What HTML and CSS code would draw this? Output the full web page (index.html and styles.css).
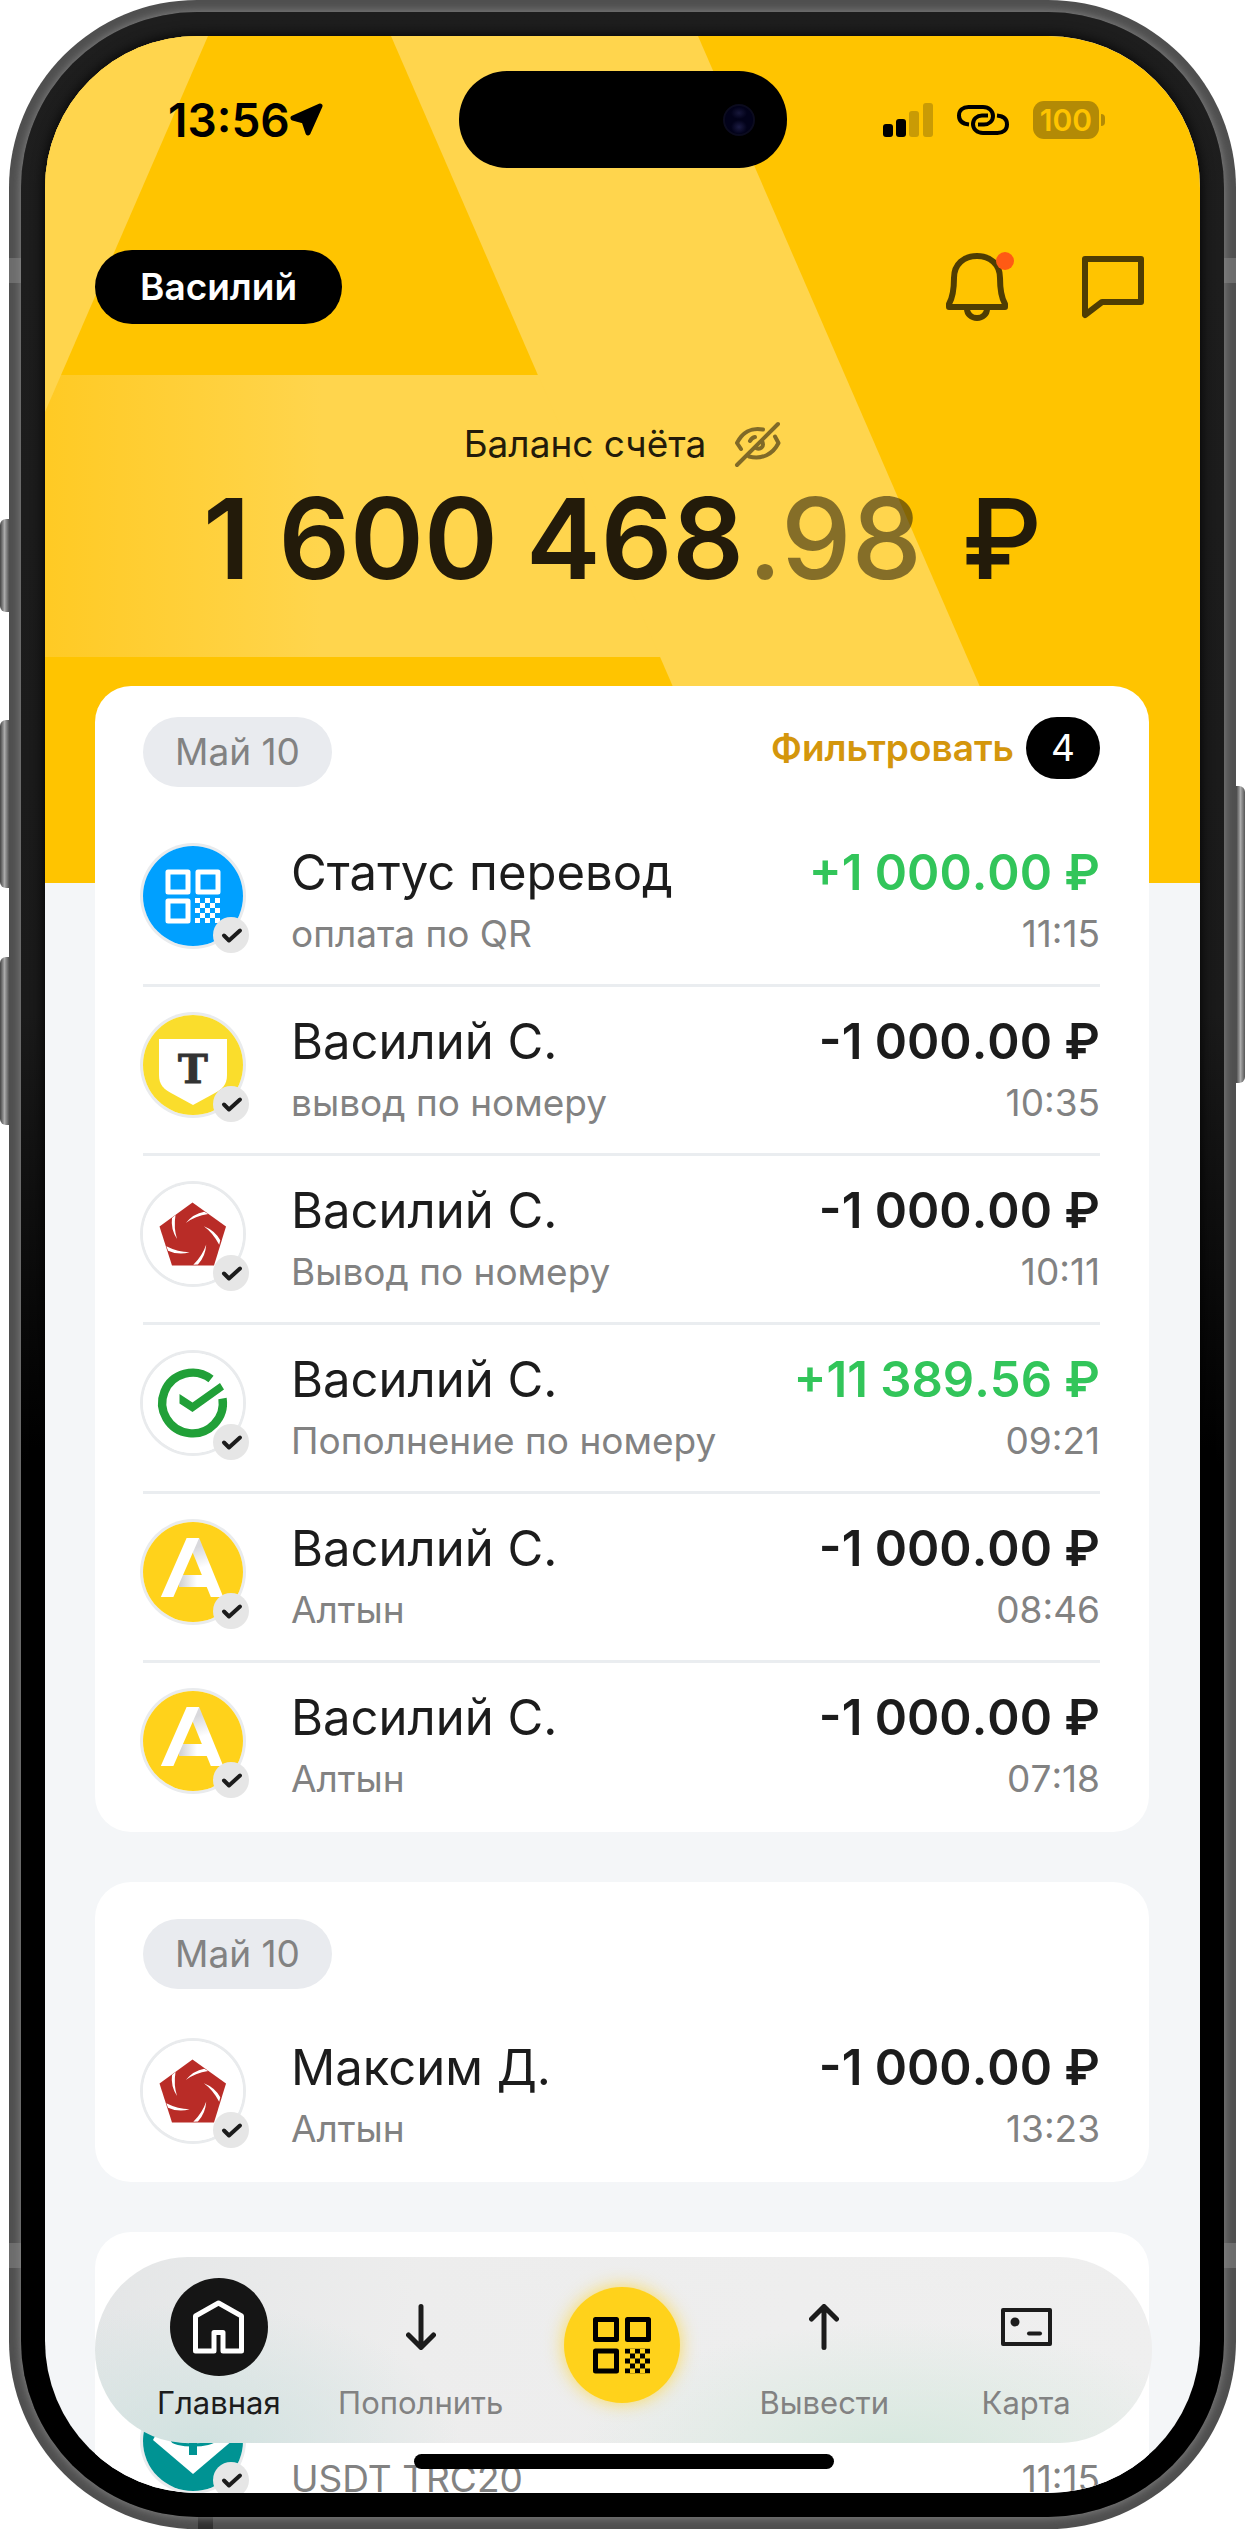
FILE: index.html
```html
<!DOCTYPE html>
<html lang="ru">
<head>
    <meta charset="UTF-8">
    <meta name="viewport" content="width=device-width, initial-scale=1.0">
    <title>Главная</title>
    <link rel="stylesheet" href="styles.css">
</head>
<body>
    <svg class="sprite" aria-hidden="true">
        <defs>
            <pattern id="checker" width="10" height="10" patternUnits="userSpaceOnUse">
                <path d="M0 0h5v5h-5zM5 5h5v5h-5z"/>
            </pattern>
            <pattern id="checker-light" width="10" height="10" patternUnits="userSpaceOnUse">
                <path d="M0 0h5v5h-5zM5 5h5v5h-5z" fill="#fff"/>
            </pattern>
            <linearGradient id="fold-leg" x1="60" y1="26" x2="66" y2="46" gradientUnits="userSpaceOnUse">
                <stop offset="0" stop-color="#d9d9dc"/>
                <stop offset="1" stop-color="#fff"/>
            </linearGradient>
            <linearGradient id="fold-bar" x1="38" y1="0" x2="56" y2="0" gradientUnits="userSpaceOnUse">
                <stop offset="0" stop-color="#cfcfd2"/>
                <stop offset="1" stop-color="#fff"/>
            </linearGradient>
            <clipPath id="altyn-clip"><rect x="10" y="18" width="84" height="59"/></clipPath>
        </defs>
        <symbol id="logo-qr" viewBox="2 2 100 100">
            <rect width="104" height="104" fill="#00a0ff"/>
            <g fill="none" stroke="#fff" stroke-width="5" stroke-linejoin="round">
                <path d="M27 28h20v20h-20zM57 28h20v20h-20zM27 57h20v20h-20z"/>
            </g>
            <g transform="translate(54 54)"><rect width="25" height="25" fill="url(#checker-light)"/></g>
        </symbol>
        <symbol id="logo-t" viewBox="2 2 100 100">
            <rect width="104" height="104" fill="#fadd2c"/>
            <path d="M18 26h68v36c0 10-5 14-12 18l-22 12l-22-12c-7-4-12-8-12-18z" fill="#fff"/>
            <text x="52" y="70" class="logo-letter">Т</text>
        </symbol>
        <symbol id="logo-swirl" viewBox="2 2 100 100">
            <rect width="104" height="104" fill="#fff"/>
            <path d="M51.500 20.500L85 44.500L73 83.500H31L18.500 44.500Z" fill="#b92c27"/>
            <g fill="#fff">
                <path id="blade" d="M31 36Q29.500 47 36 57Q32.500 46 34.500 33Z"/>
                <use href="#blade" transform="rotate(72 51.500 55)"/>
                <use href="#blade" transform="rotate(144 51.500 55)"/>
                <use href="#blade" transform="rotate(216 51.500 55)"/>
                <use href="#blade" transform="rotate(288 51.500 55)"/>
            </g>
        </symbol>
        <symbol id="logo-check" viewBox="2 2 100 100">
            <rect width="104" height="104" fill="#fff"/>
            <path d="M81.500 47.500A30.300 30.300 0 1 1 70 28" fill="none" stroke="#21a038" stroke-width="8.400"/>
            <path d="M38.500 43L51.500 51.500L79 32L83 38.500L51.500 61L38.500 52.500Z" fill="#21a038"/>
        </symbol>
        <symbol id="logo-altyn" viewBox="2 2 100 100">
            <rect width="104" height="104" fill="#ffd21b"/>
            <g clip-path="url(#altyn-clip)" fill="none">
                <path d="M78.500 83L49.500 12" stroke="url(#fold-leg)" stroke-width="11.500"/>
                <path d="M38 61H72" stroke="url(#fold-bar)" stroke-width="12"/>
                <path d="M23.500 83L54.500 12" stroke="#fff" stroke-width="11.500"/>
            </g>
        </symbol>
        <symbol id="logo-usdt" viewBox="2 2 100 100">
            <rect width="104" height="104" fill="#009393"/>
            <path d="M27 22h50l15 29l-40 34l-40-34z" fill="#fff"/>
            <path d="M34 32h36v8h-14v26h-8v-26h-14z" fill="#009393"/>
            <ellipse cx="52" cy="51" rx="21" ry="5" fill="none" stroke="#009393" stroke-width="3"/>
        </symbol>
        <symbol id="tick" viewBox="0 0 36 36">
            <path d="M11 18.500L16 23.500L27 13.500" fill="none" stroke="#1c1c1c" stroke-width="4" stroke-linecap="round" stroke-linejoin="round"/>
        </symbol>
    </svg>

    <div class="phone">
        <span class="side-button mute"></span>
        <span class="side-button volume-up"></span>
        <span class="side-button volume-down"></span>
        <span class="side-button power"></span>
        <span class="antenna top"></span>
        <span class="antenna bottom"></span>
        <span class="antenna-foot"></span>

        <div class="bezel">
            <div class="screen">
                <header class="hero">
                    <svg class="hero-shape" viewBox="0 0 1155 847" preserveAspectRatio="none" aria-hidden="true">
                        <defs>
                            <linearGradient id="bar-fade" x1="0" x2="1" y1="0" y2="0">
                                <stop offset="0" stop-color="#ffca24"/>
                                <stop offset=".45" stop-color="#ffd54d"/>
                            </linearGradient>
                        </defs>
                        <rect y="339" width="616" height="282" fill="url(#bar-fade)"/>
                        <path d="M0 0H163L0 376Z" fill="#ffd54d"/>
                        <path d="M346 0H653L1020 847H713Z" fill="#ffd54d"/>
                    </svg>

                    <div class="status-bar">
                        <div class="clock">
                            <span>13:56</span>
                            <svg width="33" height="34" viewBox="0 0 33 34" aria-hidden="true">
                                <path d="M30 3L3 15L14 18L18 30Z" stroke="#000" stroke-width="5" stroke-linejoin="round"/>
                            </svg>
                        </div>
                        <div class="island"><span class="camera"></span></div>
                        <div class="signals">
                            <svg width="50" height="34" viewBox="0 0 50 34" aria-hidden="true">
                                <rect y="21" width="10" height="13" rx="3"/>
                                <rect x="13" y="16" width="10" height="18" rx="3"/>
                                <rect x="26" y="8" width="10" height="26" rx="3" fill="#c99b05"/>
                                <rect x="40" width="10" height="34" rx="3" fill="#c99b05"/>
                            </svg>
                            <svg width="52" height="30" viewBox="0 0 52 30" fill="none" stroke="#000" stroke-width="4" aria-hidden="true">
                                <path d="M12 19.500C6 19 2 16 2 10.500S6 2 11.500 2H26C32 2 36 6 36 11S32 19.500 27 19.500H21"/>
                                <path d="M40 10.500C46 11 50 14 50 19.500S46 28 40.500 28H26C20 28 16 24 16 19S20 10.500 25 10.500H31"/>
                            </svg>
                            <div class="battery"><span>100</span></div>
                        </div>
                    </div>

                    <div class="top-row">
                        <button class="user" type="button">Василий</button>
                        <div class="actions">
                            <button class="icon-button" type="button" aria-label="Уведомления">
                                <svg width="62" height="68" viewBox="0 0 62 68" fill="none" stroke="#4f3d03" stroke-width="6" stroke-linejoin="round">
                                    <path d="M8 25C8 11 18 3 31 3S54 11 54 25C54 37 55 44 59 51V54H3V51C7 44 8 37 8 25Z"/>
                                    <path d="M21 56A10 9 0 0 0 41 56"/>
                                    <circle cx="59" cy="8" r="9" fill="#ff5a14" stroke="none"/>
                                </svg>
                            </button>
                            <button class="icon-button" type="button" aria-label="Чат">
                                <svg width="62" height="62" viewBox="0 0 62 62" fill="none" stroke="#4f3d03" stroke-width="6" stroke-linejoin="round">
                                    <path d="M3 3H59V46H20L3 59Z"/>
                                </svg>
                            </button>
                        </div>
                    </div>

                    <div class="balance-label">
                        <span>Баланс счёта</span>
                        <button class="icon-button" type="button" aria-label="Скрыть баланс">
                            <svg width="47" height="46" viewBox="0 0 47 46" fill="none" stroke="#806a28" stroke-width="4" stroke-linecap="round" stroke-linejoin="round">
                                <path d="M29 8.500C17 6 8 12 3 22L7 28"/>
                                <path d="M41 15.500L44.500 22C39 33 28 39 15 35.500"/>
                                <path d="M44 3L3 44"/>
                                <path d="M16 20Q18 16.500 21 16M28 20C31 26 26 29 22 27"/>
                            </svg>
                        </button>
                    </div>
                    <p class="balance"><span>1&nbsp;600&nbsp;468</span><span class="cents">.98</span><span class="currency">₽</span></p>
                </header>

                <main class="feed">
                    <section class="card first">
                        <div class="card-head">
                            <span class="date">Май 10</span>
                            <button class="filter" type="button">Фильтровать <span class="count">4</span></button>
                        </div>
                        <ul class="operations">
                            <li class="operation">
                                <div class="avatar"><svg class="logo"><use href="#logo-qr"/></svg><svg class="done"><use href="#tick"/></svg></div>
                                <div class="who"><p class="name">Статус перевод</p><p class="note">оплата по QR</p></div>
                                <div class="sum"><p class="amount income">+1&nbsp;000.00&nbsp;₽</p><p class="note">11:15</p></div>
                            </li>
                            <li class="operation">
                                <div class="avatar"><svg class="logo"><use href="#logo-t"/></svg><svg class="done"><use href="#tick"/></svg></div>
                                <div class="who"><p class="name">Василий С.</p><p class="note">вывод по номеру</p></div>
                                <div class="sum"><p class="amount">-1&nbsp;000.00&nbsp;₽</p><p class="note">10:35</p></div>
                            </li>
                            <li class="operation">
                                <div class="avatar"><svg class="logo"><use href="#logo-swirl"/></svg><svg class="done"><use href="#tick"/></svg></div>
                                <div class="who"><p class="name">Василий С.</p><p class="note">Вывод по номеру</p></div>
                                <div class="sum"><p class="amount">-1&nbsp;000.00&nbsp;₽</p><p class="note">10:11</p></div>
                            </li>
                            <li class="operation">
                                <div class="avatar"><svg class="logo"><use href="#logo-check"/></svg><svg class="done"><use href="#tick"/></svg></div>
                                <div class="who"><p class="name">Василий С.</p><p class="note">Пополнение по номеру</p></div>
                                <div class="sum"><p class="amount income">+11&nbsp;389.56&nbsp;₽</p><p class="note">09:21</p></div>
                            </li>
                            <li class="operation">
                                <div class="avatar"><svg class="logo"><use href="#logo-altyn"/></svg><svg class="done"><use href="#tick"/></svg></div>
                                <div class="who"><p class="name">Василий С.</p><p class="note">Алтын</p></div>
                                <div class="sum"><p class="amount">-1&nbsp;000.00&nbsp;₽</p><p class="note">08:46</p></div>
                            </li>
                            <li class="operation">
                                <div class="avatar"><svg class="logo"><use href="#logo-altyn"/></svg><svg class="done"><use href="#tick"/></svg></div>
                                <div class="who"><p class="name">Василий С.</p><p class="note">Алтын</p></div>
                                <div class="sum"><p class="amount">-1&nbsp;000.00&nbsp;₽</p><p class="note">07:18</p></div>
                            </li>
                        </ul>
                    </section>

                    <section class="card">
                        <div class="card-head">
                            <span class="date">Май 10</span>
                        </div>
                        <ul class="operations">
                            <li class="operation">
                                <div class="avatar"><svg class="logo"><use href="#logo-swirl"/></svg><svg class="done"><use href="#tick"/></svg></div>
                                <div class="who"><p class="name">Максим Д.</p><p class="note">Алтын</p></div>
                                <div class="sum"><p class="amount">-1&nbsp;000.00&nbsp;₽</p><p class="note">13:23</p></div>
                            </li>
                        </ul>
                    </section>

                    <section class="card">
                        <div class="card-head"></div>
                        <ul class="operations">
                            <li class="operation">
                                <div class="avatar"><svg class="logo"><use href="#logo-usdt"/></svg><svg class="done"><use href="#tick"/></svg></div>
                                <div class="who"><p class="name">&nbsp;</p><p class="note">USDT TRC20</p></div>
                                <div class="sum"><p class="amount">&nbsp;</p><p class="note">11:15</p></div>
                            </li>
                        </ul>
                    </section>
                </main>

                <nav class="tab-bar">
                    <a class="tab active" href="#home">
                        <span class="tab-icon">
                            <svg width="51" height="54" viewBox="0 0 51 54" fill="none" stroke="#fff" stroke-width="5" stroke-linejoin="round">
                                <path d="M2.500 16L25.500 3L48.500 16V51H30V32.500H21V51H2.500Z"/>
                            </svg>
                        </span>
                        Главная
                    </a>
                    <a class="tab" href="#deposit">
                        <span class="tab-icon">
                            <svg width="30" height="46" viewBox="0 0 30 46" fill="none" stroke="#1c1c1c" stroke-width="5" stroke-linecap="round" stroke-linejoin="round">
                                <path d="M15 2.500V43M2.500 31L15 43.500L27.500 31"/>
                            </svg>
                        </span>
                        Пополнить
                    </a>
                    <a class="scan" href="#scan" aria-label="Сканировать QR">
                        <svg width="58" height="57" viewBox="0 0 58 57">
                            <path d="M2.500 2.500h21v20h-21zM34.500 2.500h21v20h-21zM2.500 34h21v20h-21z" fill="none" stroke="#000" stroke-width="5" stroke-linejoin="round"/>
                            <g transform="translate(32 31.500)"><rect width="25" height="25" fill="url(#checker)"/></g>
                        </svg>
                    </a>
                    <a class="tab" href="#withdraw">
                        <span class="tab-icon">
                            <svg width="30" height="46" viewBox="0 0 30 46" fill="none" stroke="#1c1c1c" stroke-width="5" stroke-linecap="round" stroke-linejoin="round">
                                <path d="M15 43.500V3M2.500 15L15 2.500L27.500 15"/>
                            </svg>
                        </span>
                        Вывести
                    </a>
                    <a class="tab" href="#card">
                        <span class="tab-icon">
                            <svg width="51" height="38" viewBox="0 0 51 38" fill="none" stroke="#1c1c1c" stroke-width="4" stroke-linecap="round" stroke-linejoin="round">
                                <path d="M2 2H49V36H2Z"/>
                                <path d="M28 25.500H39"/>
                                <circle cx="14" cy="14" r="4.500" fill="#1c1c1c" stroke="none"/>
                            </svg>
                        </span>
                        Карта
                    </a>
                </nav>
                <span class="home-indicator"></span>
            </div>
        </div>
    </div>
</body>
</html>
```
FILE: styles.css
```css
* {
    box-sizing: border-box;
}
body {
    margin: 0;
    background: #fff;
    color: #1c1c1c;
    font-family: Inter, "Noto Sans", sans-serif;
    font-size: 37px;
    line-height: 44px;
}
p, ul {
    margin: 0;
    padding: 0;
}
button {
    font: inherit;
    border: none;
    padding: 0;
    background: none;
    cursor: pointer;
}
a {
    text-decoration: none;
}
svg {
    display: block;
    flex: none;
}
.sprite {
    position: absolute;
    width: 0;
    height: 0;
}

/* device */
.phone {
    position: relative;
    height: 100vh;
    margin: 0 9px;
    padding: 12px;
    background: #4f4f4f;
    border-radius: 188px;
}
.bezel {
    position: relative;
    height: 100%;
    padding: 24px;
    background: linear-gradient(#1e1e1e, #1a1a1a 40%, #000 58%);
    border-radius: 176px;
    box-shadow: 0 0 10px #8a8a8a;
}
.side-button {
    position: absolute;
    width: 9px;
    background: linear-gradient(90deg, #444, #aaa 50%, #555);
}
.mute, .volume-up, .volume-down {
    left: -9px;
    border-radius: 6px 0 0 6px;
}
.mute {
    top: 519px;
    height: 93px;
}
.volume-up {
    top: 720px;
    height: 168px;
}
.volume-down {
    top: 957px;
    height: 168px;
}
.power {
    top: 786px;
    right: -9px;
    height: 297px;
    border-radius: 0 6px 6px 0;
}
.antenna {
    position: absolute;
    left: 0;
    right: 0;
    height: 25px;
    background: #6c6c6c;
}
.antenna.top {
    top: 258px;
}
.antenna.bottom {
    bottom: 261px;
}
.antenna-foot {
    position: absolute;
    left: 189px;
    bottom: 0;
    width: 15px;
    height: 12px;
    background: #303030;
}
.screen {
    position: relative;
    height: 100%;
    overflow: hidden;
    background: #f4f6f8;
    border-radius: 152px;
    box-shadow: 0 0 14px #000;
}

/* header */
.hero {
    position: relative;
    padding-bottom: 277px;
    background: #ffc400;
}
.hero-shape {
    position: absolute;
    inset: 0;
    width: 100%;
    height: 100%;
}
.status-bar {
    position: relative;
    display: grid;
    grid-template-columns: 1fr auto 1fr;
    align-items: center;
    padding: 35px 95px 0 95px;
}
.clock {
    display: flex;
    align-items: center;
    padding-left: 28px;
    color: #000;
    font-size: 46px;
    font-weight: 600;
}
.island {
    display: flex;
    align-items: center;
    justify-content: flex-end;
    width: 328px;
    height: 97px;
    padding: 0 32px;
    background: #000;
    border-radius: 48px;
}
.camera {
    width: 32px;
    height: 32px;
    border-radius: 50%;
    border: 2px solid #0b0b1e;
    background: radial-gradient(ellipse 8px 6px at 50% 25%, #17173a, transparent), radial-gradient(ellipse 8px 7px at 50% 75%, #1c1c44, transparent), #02021a;
}
.signals {
    display: flex;
    align-items: center;
    justify-content: flex-end;
    gap: 24px;
}
.battery {
    position: relative;
    width: 66px;
    height: 38px;
    margin-right: 6px;
    background: #b38a05;
    border-radius: 11px;
    color: #ffc400;
    font-size: 30px;
    font-weight: 600;
    line-height: 38px;
    text-align: center;
}
.battery::after {
    content: "";
    position: absolute;
    top: 13px;
    right: -6px;
    width: 4px;
    height: 12px;
    background: #b38a05;
    border-radius: 0 6px 6px 0;
}
.top-row {
    position: relative;
    display: flex;
    align-items: center;
    justify-content: space-between;
    margin-top: 82px;
    padding: 0 56px 0 50px;
}
.user {
    height: 74px;
    padding: 0 45px;
    background: #000;
    border-radius: 37px;
    color: #fff;
    font-weight: 600;
}
.actions {
    display: flex;
    align-items: center;
    gap: 74px;
}
.icon-button svg {
    overflow: visible;
}
.balance-label {
    position: relative;
    display: flex;
    align-items: center;
    justify-content: center;
    gap: 28px;
    height: 44px;
    margin-top: 98px;
    color: #231b0a;
}
.balance {
    position: relative;
    display: flex;
    justify-content: center;
    margin-top: 4px;
    color: #231b0a;
    font-size: 112px;
    font-weight: 600;
    line-height: 136px;
}
.cents {
    margin-left: 4px;
    font-weight: 500;
    opacity: .55;
}
.currency {
    margin-left: 40px;
    font-weight: 500;
}

/* operations */
.feed {
    position: relative;
    display: grid;
    gap: 50px;
    margin-top: -197px;
    padding: 0 51px 0 50px;
}
.card {
    padding: 37px 49px 0 48px;
    background: #fff;
    border-radius: 36px;
}
.card.first {
    padding-top: 31px;
}
.card-head {
    display: flex;
    align-items: flex-start;
    justify-content: space-between;
    height: 94px;
}
.first .card-head {
    height: 101px;
}
.date {
    padding: 13px 32px;
    background: #e9ebef;
    border-radius: 35px;
    color: #828282;
}
.filter {
    display: flex;
    align-items: center;
    gap: 12px;
    color: #d4960c;
    font-weight: 600;
}
.count {
    width: 74px;
    background: #000;
    border-radius: 31px;
    color: #fff;
    font-weight: 400;
    line-height: 62px;
}
.operations {
    list-style: none;
}
.operation {
    display: flex;
    align-items: flex-start;
    height: 169px;
    padding-top: 26px;
    border-bottom: 3px solid #eaedf0;
}
.operation:last-child {
    border-bottom: none;
}
.avatar {
    position: relative;
    flex: none;
    width: 100px;
    height: 100px;
    margin: 2px 48px 0 0;
    border-radius: 50%;
    box-shadow: 0 0 0 3px #e9ebed;
}
.logo {
    width: 100px;
    height: 100px;
    border-radius: 50%;
}
.logo-letter {
    fill: #333;
    stroke: #333;
    stroke-width: 1px;
    font-family: "DejaVu Serif", serif;
    font-size: 40px;
    font-weight: 700;
    text-anchor: middle;
}
.done {
    position: absolute;
    right: -6px;
    bottom: -7px;
    width: 36px;
    height: 36px;
    background: #e6e6e6;
    border-radius: 50%;
}
.who {
    flex: 1;
}
.sum {
    font-kerning: none;
    text-align: right;
}
.name, .amount {
    margin-bottom: 10px;
    font-size: 49px;
    line-height: 58px;
}
.amount {
    font-weight: 600;
}
.income {
    color: #32c55a;
}
.note {
    color: #828282;
}

/* bottom navigation */
.tab-bar {
    position: absolute;
    left: 50px;
    right: 48px;
    bottom: 50px;
    display: grid;
    grid-template-columns: repeat(5, 1fr);
    height: 186px;
    padding: 0 25px 0 23px;
    background:
        radial-gradient(ellipse 260px 140px at 10% 100%, #d1e2e0, transparent),
        radial-gradient(ellipse 320px 130px at 76% 105%, #d6e8de, transparent),
        linear-gradient(100deg, #e4e6e7, #ededed 30%, #efefef);
    border-radius: 93px;
}
.tab {
    display: flex;
    flex-direction: column;
    align-items: center;
    gap: 8px;
    padding-top: 21px;
    color: #828282;
    font-size: 31px;
    line-height: 38px;
}
.tab.active {
    color: #1c1c1c;
}
.tab-icon {
    display: flex;
    align-items: center;
    justify-content: center;
    width: 98px;
    height: 98px;
    border-radius: 50%;
}
.active .tab-icon {
    background: #151515;
}
.scan {
    display: flex;
    align-items: center;
    justify-content: center;
    place-self: center;
    width: 116px;
    height: 116px;
    margin-bottom: 10px;
    background: #ffd21b;
    border-radius: 50%;
    box-shadow: 0 0 18px rgba(255, 210, 27, .7);
}
.home-indicator {
    position: absolute;
    left: 50%;
    bottom: 24px;
    width: 420px;
    height: 15px;
    margin-left: -209px;
    background: #000;
    border-radius: 8px;
}
```
